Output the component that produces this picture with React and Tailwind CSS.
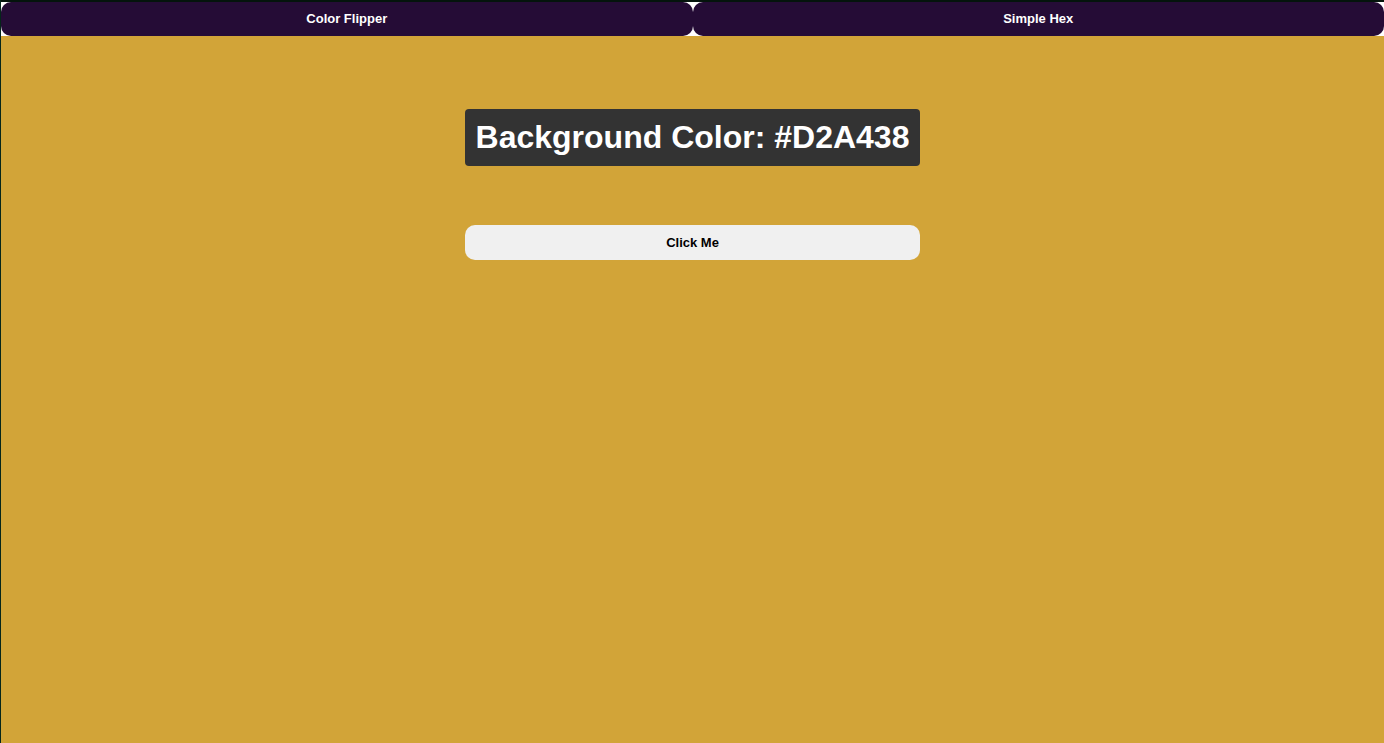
export default function App() {
  return (
    <div
      className="min-h-[743px] w-full bg-[#d2a438] border-l border-l-[#06261a] flex flex-col"
      style={{ fontFamily: '"Liberation Sans", Arial, sans-serif' }}
    >
      <nav className="flex bg-white border-t-2 border-t-[#04140c] h-[36px]">
        <button className="flex-1 h-[34px] bg-[#250c36] text-white font-bold text-[13px] rounded-[10px] flex items-center justify-center">
          Color Flipper
        </button>
        <button className="flex-1 h-[34px] bg-[#250c36] text-white font-bold text-[13px] rounded-[10px] flex items-center justify-center">
          Simple Hex
        </button>
      </nav>
      <div className="flex justify-center pt-[73px]">
        <div className="inline-flex flex-col">
          <h1 className="bg-[#333333] text-white font-bold text-[32px] leading-[37px] px-[11px] py-[10px] rounded-[4px] whitespace-nowrap">
            Background Color: #D2A438
          </h1>
          <button className="mt-[59px] h-[35px] bg-[#f0f0f0] text-black font-bold text-[13px] rounded-[10px]">
            Click Me
          </button>
        </div>
      </div>
    </div>
  );
}
